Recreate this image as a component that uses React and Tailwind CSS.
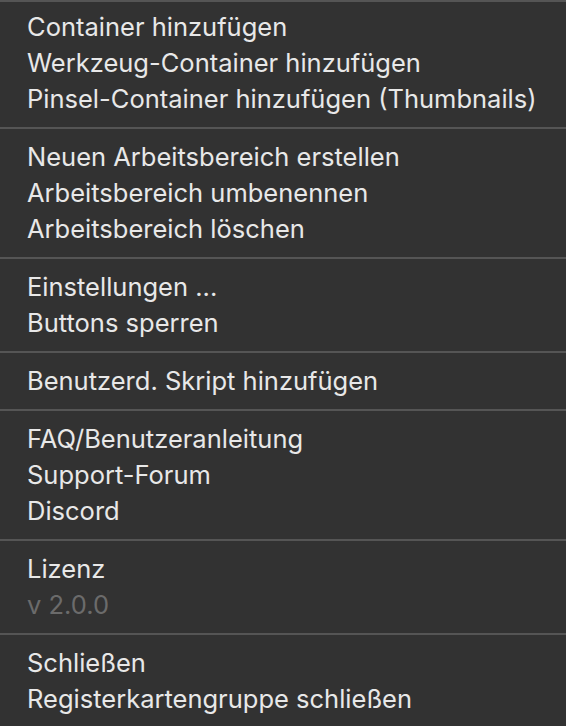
import React from "react";

const groups = [
  ["Container hinzufügen", "Werkzeug-Container hinzufügen", "Pinsel-Container hinzufügen (Thumbnails)"],
  ["Neuen Arbeitsbereich erstellen", "Arbeitsbereich umbenennen", "Arbeitsbereich löschen"],
  ["Einstellungen ...", "Buttons sperren"],
  ["Benutzerd. Skript hinzufügen"],
  ["FAQ/Benutzeranleitung", "Support-Forum", "Discord"],
  ["Lizenz", { label: "v 2.0.0", disabled: true }],
  ["Schließen", "Registerkartengruppe schließen"],
];

const MenuItem = ({ item }) => {
  const label = typeof item === "string" ? item : item.label;
  const disabled = typeof item !== "string" && item.disabled;
  return (
    <div
      className={`h-9 flex items-center pl-[27px] whitespace-nowrap ${
        disabled ? "text-[#6b6b6b]" : "text-[#e8e8e8]"
      }`}
    >
      {label}
    </div>
  );
};

const App = () => {
  return (
    <div
      className="w-[566px] h-[726px] overflow-hidden bg-[#323232] border-t-2 border-[#555555] text-[25.5px]"
      style={{ fontFamily: "Inter, 'Noto Sans', sans-serif" }}
    >
      {groups.map((items, i) => (
        <div key={i}>
          {i > 0 && <div className="h-[2px] bg-[#555555]" />}
          <div className={i === 0 ? "pt-[7px] pb-[10px]" : "py-[10px]"}>
            {items.map((item, j) => (
              <MenuItem key={j} item={item} />
            ))}
          </div>
        </div>
      ))}
    </div>
  );
};

export default App;
